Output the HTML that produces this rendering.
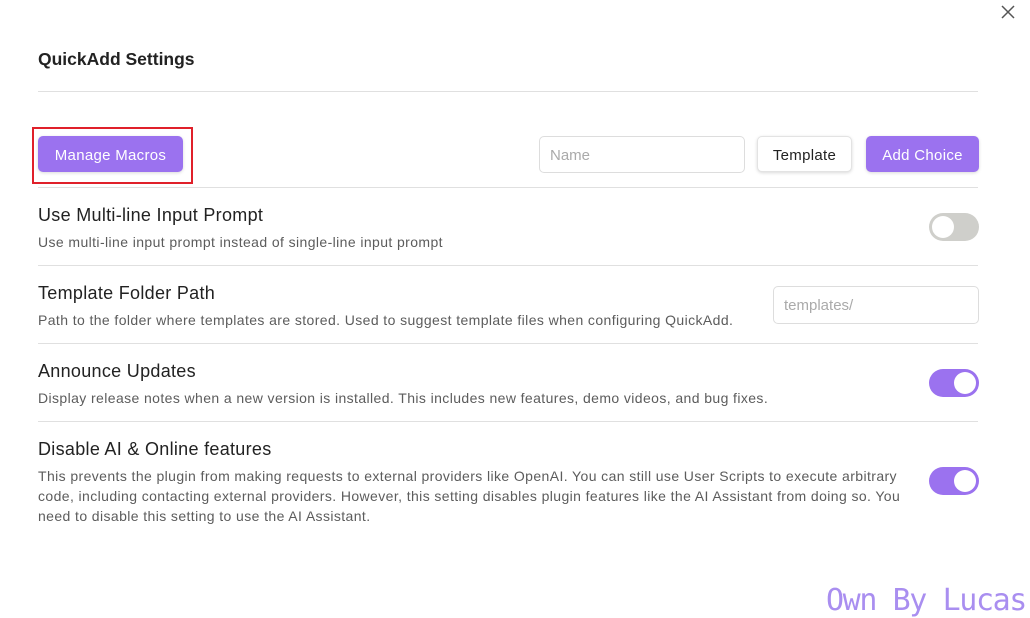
<!DOCTYPE html>
<html><head><meta charset="utf-8"><style>
body{margin:0;width:1030px;height:617px;background:#fff;font-family:"Liberation Sans",sans-serif;color:#222;position:relative;overflow:hidden}
.a{position:absolute}
.hr{position:absolute;left:38px;width:940px;height:1px;background:#e0e0e0}
.h{position:absolute;left:38px;font-size:18px;letter-spacing:0.3px;color:#222}
.d{position:absolute;left:38px;font-size:14px;letter-spacing:0.4px;color:#5c5c5c;line-height:20px}
.tg{position:absolute;left:929px;width:50px;height:28px;border-radius:14px;background:#9b72ef}
.tg i{position:absolute;top:3px;right:3px;width:22px;height:22px;border-radius:50%;background:#fff}
.tg.off{background:#cfcfcb}.tg.off i{left:3px;right:auto}
.btn{position:absolute;height:36px;border-radius:5px;font-size:15px;letter-spacing:0.3px;display:flex;align-items:center;justify-content:center;box-shadow:0 1px 3px rgba(0,0,0,.15);padding-top:2px;box-sizing:border-box}
.p{background:#9b72ef;color:#fff}
</style></head><body>
<svg class="a" style="left:1001px;top:5px" width="14" height="14" viewBox="0 0 14 14"><path d="M1 1L13 13M13 1L1 13" stroke="#555" stroke-width="1.5"/></svg>
<div class="a" style="left:38px;top:49px;font-size:17.5px;font-weight:600;color:#222">QuickAdd Settings</div>
<div class="hr" style="top:91px"></div>
<div class="a" style="left:32px;top:127px;width:157px;height:53px;border:2px solid #e0202a"></div>
<div class="btn p" style="left:38px;top:136px;width:145px">Manage Macros</div>
<div class="a" style="left:539px;top:136px;border:1px solid #ddd;border-radius:5px;font-size:15px;color:#aaa;line-height:38px;padding-left:10px;box-sizing:border-box;width:206px;height:37px">Name</div>
<div class="btn" style="left:757px;top:136px;width:95px;border:1px solid #e3e3e3;background:#fff;color:#222">Template</div>
<div class="btn p" style="left:866px;top:136px;width:113px">Add Choice</div>
<div class="hr" style="top:187px"></div>
<div class="h" style="top:205px">Use Multi-line Input Prompt</div>
<div class="d" style="top:232px">Use multi-line input prompt instead of single-line input prompt</div>
<div class="tg off" style="top:213px"><i></i></div>
<div class="hr" style="top:265px"></div>
<div class="h" style="top:283px">Template Folder Path</div>
<div class="d" style="top:310px">Path to the folder where templates are stored. Used to suggest template files when configuring QuickAdd.</div>
<div class="a" style="left:773px;top:286px;width:206px;height:38px;border:1px solid #ddd;border-radius:5px;box-sizing:border-box;font-size:15px;color:#aaa;line-height:38px;padding-left:10px">templates/</div>
<div class="hr" style="top:343px"></div>
<div class="h" style="top:361px">Announce Updates</div>
<div class="d" style="top:388px">Display release notes when a new version is installed. This includes new features, demo videos, and bug fixes.</div>
<div class="tg" style="top:369px"><i></i></div>
<div class="hr" style="top:421px"></div>
<div class="h" style="top:439px">Disable AI &amp; Online features</div>
<div class="d" style="top:466px;width:885px">This prevents the plugin from making requests to external providers like OpenAI. You can still use User Scripts to execute arbitrary code, including contacting external providers. However, this setting disables plugin features like the AI Assistant from doing so. You need to disable this setting to use the AI Assistant.</div>
<div class="tg" style="top:467px"><i></i></div>
<div class="a" style="left:826px;top:583px;font-family:'DejaVu Sans Mono',monospace;font-size:30px;color:#a98ef0;letter-spacing:-1.4px">Own By Lucas</div>
</body></html>
